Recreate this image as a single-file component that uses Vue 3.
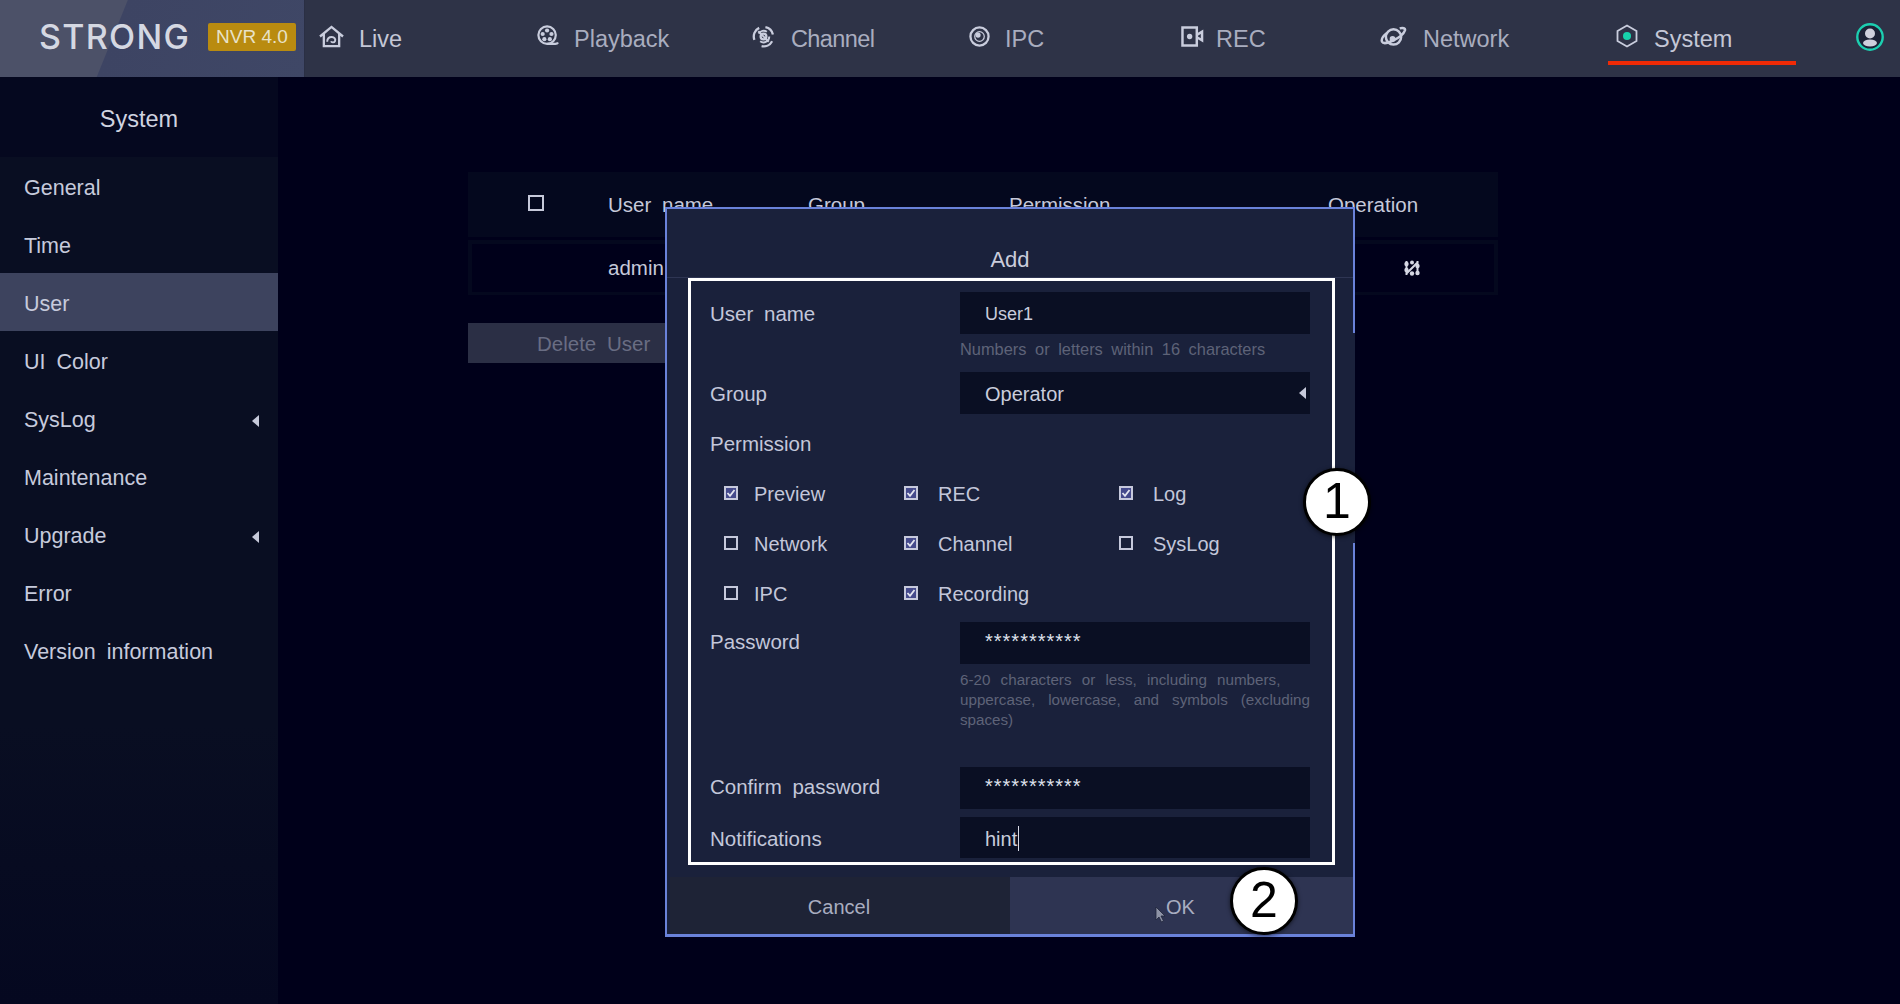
<script setup>
const sideItems = [
  { label: 'General' }, { label: 'Time' }, { label: 'User', active: true }, { label: 'UI Color' },
  { label: 'SysLog', arrow: true }, { label: 'Maintenance' }, { label: 'Upgrade', arrow: true },
  { label: 'Error' }, { label: 'Version information' }
]
const perms = [
  { label: 'Preview', on: true }, { label: 'REC', on: true }, { label: 'Log', on: true },
  { label: 'Network', on: false }, { label: 'Channel', on: true }, { label: 'SysLog', on: false },
  { label: 'IPC', on: false }, { label: 'Recording', on: true }
]
</script>

<template>
  <div class="page">
    <header class="topbar">
      <div class="brand">
        <span class="logo">STRONG</span>
        <span class="badge">NVR 4.0</span>
      </div>
      <nav class="nav">
        <div class="nav-item live">
          <svg class="ico" viewBox="0 0 26 24" fill="none" stroke="#c9cddd" stroke-width="2.400">
            <path d="M1 12 13 2l12 10M5 9.500V22h16V9.500" />
            <path d="M8.500 17.500c0-3 2-5 4.800-5s4.200 2.300 3.400 4.200c-.8 1.800-3.600 2-4.200.3" stroke-width="2" />
          </svg>
          <span>Live</span>
        </div>
        <div class="nav-item playback">
          <svg class="ico" viewBox="0 0 24 24" fill="none" stroke="#c9cddd" stroke-width="2.400">
            <circle cx="11" cy="11" r="9.500" />
            <path d="M11 20.500h9c1.500 0 2.500-.5 3-1.500" />
            <g fill="#c9cddd" stroke="none"><circle cx="11" cy="6" r="2.300" /><circle cx="6.200" cy="9.800" r="2.300" /><circle cx="15.800" cy="9.800" r="2.300" /><circle cx="8" cy="15.500" r="2.300" /><circle cx="14" cy="15.500" r="2.300" /></g>
          </svg>
          <span>Playback</span>
        </div>
        <div class="nav-item channel">
          <svg class="ico" viewBox="0 0 24 24" fill="none" stroke="#c9cddd" stroke-width="2.400">
            <circle cx="12" cy="12" r="3" />
            <path d="M7 9A6 6 0 0 1 15.500 7M18 12a6 6 0 0 1-9.500 5M6.500 6.500l11 11" stroke-width="2" />
            <path d="M2.500 15.500A10 10 0 0 1 7.500 3M14 2.200A10 10 0 0 1 21.800 10M21 17A10 10 0 0 1 10 22" />
          </svg>
          <span>Channel</span>
        </div>
        <div class="nav-item ipc">
          <svg class="ico" viewBox="0 0 22 22" fill="none" stroke="#c9cddd" stroke-width="2.400">
            <circle cx="11" cy="11" r="9.500" />
            <circle cx="11" cy="11" r="5" stroke-width="1.300" />
            <circle cx="9.500" cy="9.500" r="2.700" fill="#c9cddd" stroke="none" />
          </svg>
          <span>IPC</span>
        </div>
        <div class="nav-item rec">
          <svg class="ico" viewBox="0 0 24 22" fill="none" stroke="#c9cddd" stroke-width="2.600">
            <path d="M1.500 1.500h15v19h-15zM17 9l5-3v9l-5-3" />
            <circle cx="9" cy="11" r="2.800" fill="#c9cddd" stroke="none" />
          </svg>
          <span>REC</span>
        </div>
        <div class="nav-item network">
          <svg class="ico" viewBox="0 0 28 22" fill="none" stroke="#c9cddd" stroke-width="2.600">
            <circle cx="14" cy="11.500" r="8" />
            <path d="M7.500 7C3.500 10 1 14 2 16.500c1 2 6 1.500 12-1.500s11-7.500 12-10.500c.6-2-2-3-5.500-2" />
            <circle cx="13" cy="13.500" r="3" fill="#c9cddd" stroke="none" />
          </svg>
          <span>Network</span>
        </div>
        <div class="nav-item system">
          <svg class="ico" viewBox="0 0 22 24" fill="none" stroke="#c9cddd" stroke-width="1.800">
            <path d="M11 1.500 20.500 7v10L11 22.500 1.500 17V7z" />
            <circle cx="11" cy="12" r="4" fill="#17d3ac" stroke="none" />
          </svg>
          <span>System</span>
        </div>
        <div class="avatar">
          <svg viewBox="0 0 28 28" width="28" height="28">
            <circle cx="14" cy="14" r="12.700" fill="#1d2236" stroke="#1ccfb0" stroke-width="2.400" />
            <circle cx="14" cy="10.500" r="5" fill="#cfd0dc" />
            <ellipse cx="14" cy="20" rx="7" ry="3.500" fill="#cfd0dc" />
          </svg>
        </div>
      </nav>
    </header>

    <div class="body">
      <aside class="sidebar">
        <div class="side-title">System</div>
        <div
          v-for="item in sideItems"
          :key="item.label"
          class="side-item"
          :class="{ active: item.active }"
        >
          <span>{{ item.label }}</span>
          <i v-if="item.arrow" class="tri"></i>
        </div>
      </aside>

      <main class="main">
        <div class="thead">
          <span class="c-check"><i class="box"></i></span>
          <span class="c-name">User name</span>
          <span class="c-group">Group</span>
          <span class="c-perm">Permission</span>
          <span class="c-op">Operation</span>
        </div>
        <div class="trow">
          <span class="c-check"></span>
          <span class="c-name">admin</span>
          <span class="c-group"></span>
          <span class="c-perm"></span>
          <span class="c-op">
            <svg class="op-icon" viewBox="0 0 16 16" fill="none" stroke="#d6d8e4" stroke-width="2">
              <path d="M2.500 1v14M13.500 1v14M2 14 14 2" />
              <g fill="#d6d8e4" stroke="none"><circle cx="2.500" cy="4" r="2.200" /><circle cx="2.500" cy="10" r="2.200" /><circle cx="13.500" cy="6" r="2.200" /><circle cx="13.500" cy="13" r="2.200" /><circle cx="8" cy="13.500" r="2.200" /><circle cx="8" cy="2.500" r="2" /></g>
            </svg>
          </span>
        </div>
        <div class="delete-btn"><span>Delete User</span></div>
      </main>
    </div>

    <section class="modal">
      <i class="modal-rborder"></i>
      <h2 class="modal-title">Add</h2>
      <div class="form">
        <div class="field f-user">
          <label>User name</label>
          <div class="ctl">
            <div class="input">User1</div>
            <p class="hint">Numbers or letters within 16 characters</p>
          </div>
        </div>
        <div class="field f-group">
          <label>Group</label>
          <div class="ctl">
            <div class="input select">Operator<i class="tri"></i></div>
          </div>
        </div>
        <div class="perm-title">Permission</div>
        <div class="perm-grid">
          <div v-for="p in perms" :key="p.label" class="perm">
            <svg class="cb" viewBox="0 0 14 14">
              <rect x="1" y="1" width="12" height="12" :fill="p.on ? '#454a8c' : 'none'" stroke="#c6c9dc" stroke-width="2" />
              <path v-if="p.on" d="M3.500 7l2.500 2.800L10.500 4" fill="none" stroke="#e4e6f0" stroke-width="1.800" />
            </svg>
            <span>{{ p.label }}</span>
          </div>
        </div>
        <div class="field f-pass">
          <label>Password</label>
          <div class="ctl">
            <div class="input stars">***********</div>
            <p class="hint pass-hint">
              <span>6-20 characters or less, including numbers,</span>
              <span class="full">uppercase, lowercase, and symbols (excluding</span>
              <span>spaces)</span>
            </p>
          </div>
        </div>
        <div class="field f-confirm">
          <label>Confirm password</label>
          <div class="ctl">
            <div class="input stars">***********</div>
          </div>
        </div>
        <div class="field f-note">
          <label>Notifications</label>
          <div class="ctl">
            <div class="input note">hint<i class="caret"></i></div>
          </div>
        </div>
      </div>
      <div class="modal-foot">
        <div class="btn cancel">Cancel</div>
        <div class="btn ok">OK</div>
      </div>
    </section>

    <div class="marker m1">1</div>
    <div class="marker m2">2</div>
    <svg class="pointer" viewBox="0 0 11 17">
      <path d="M1 1v13l3-3 2.500 5 2-1-2.500-5h4z" fill="#8e93a6" stroke="#20243a" stroke-width=".8" />
    </svg>
  </div>
</template>

<style>
html, body { margin: 0; background: #00001a; }
</style>

<style scoped>
.page {
  position: relative;
  width: 1900px;
  height: 1004px;
  overflow: hidden;
  display: flex;
  flex-direction: column;
  background: #00001a;
  color: #c6c9da;
  font-family: "Liberation Sans", Arial, sans-serif;
  font-size: 21px;
  word-spacing: 5px;
}

/* top bar */
.topbar { height: 77px; flex: none; display: flex; background: #2e3347; }
.brand {
  width: 305px;
  flex: none;
  box-sizing: border-box;
  padding: 0 8px 3px 39px;
  display: flex;
  align-items: center;
  justify-content: space-between;
  background: linear-gradient(112deg, #4c5168 0, #4c5168 118px, #3d4463 119px, #3f4766 100%);
  border-right: 1px solid #2a2f44;
}
.logo {
  font-family: Inter, "Liberation Sans", sans-serif;
  font-weight: 500;
  font-size: 34px;
  line-height: 30px;
  letter-spacing: 1.300px;
  color: #d5d8e2;
}
.badge {
  width: 88px;
  height: 28px;
  border-radius: 2px;
  background: #b98b10;
  color: #e8e2c8;
  font-size: 19px;
  line-height: 28px;
  text-align: center;
  word-spacing: 0;
}
.nav { flex: 1; display: flex; align-items: stretch; position: relative; }
.nav-item {
  display: flex;
  align-items: center;
  height: 77px;
  box-sizing: border-box;
  padding: 1px 0 0;
  font-size: 23.500px;
  color: #a9adbf;
  flex: none;
  position: relative;
}
.ico { flex: none; display: block; margin-top: -6px; }
.live { width: 232px; padding-left: 14px; color: #c4c7d6; }
.live .ico { width: 25px; height: 23px; margin-right: 15px; }
.playback { width: 215px; }
.playback .ico { width: 22px; height: 22px; margin-right: 15px; }
.channel { width: 217px; letter-spacing: -0.6px; }
.channel .ico { width: 23px; height: 23px; margin-right: 16px; }
.ipc { width: 212px; }
.ipc .ico { width: 21px; height: 21px; margin-right: 15px; }
.rec { width: 199px; }
.rec .ico { width: 23px; height: 21px; margin-right: 12px; }
.network { width: 228px; }
.network .ico { width: 27px; height: 21px; margin-right: 16px; }
.system { width: 188px; padding-left: 8px; color: #c4c7d6; }
.system .ico { width: 22px; height: 24px; margin-right: 16px; }
.system::after {
  content: "";
  position: absolute;
  left: 0;
  right: 0;
  top: 61px;
  height: 4px;
  background: #f02a06;
}
.avatar { margin-left: auto; margin-right: 16px; padding-top: 23px; }
.avatar svg { display: block; }

/* layout */
.body { flex: 1; display: flex; min-height: 0; }
.sidebar {
  width: 278px;
  flex: none;
  background: linear-gradient(#090e22 0, #090e22 70%, #050820 100%);
}
.side-title {
  height: 80px;
  box-sizing: border-box;
  display: flex;
  align-items: center;
  justify-content: center;
  padding-top: 4px;
  font-size: 23.500px;
  color: #d0d3e0;
  background: #05081f;
}
.side-item {
  height: 58px;
  box-sizing: border-box;
  padding: 5px 19px 0 24px;
  display: flex;
  align-items: center;
  justify-content: space-between;
  color: #c6cadc;
  font-size: 21.500px;
}
.side-item.active { background: #3d435e; }
.tri {
  display: block;
  width: 0;
  height: 0;
  border-top: 6px solid transparent;
  border-bottom: 6px solid transparent;
  border-right: 7px solid #c6c9da;
}

/* table */
.main { flex: 1; padding: 95px 0 0 190px; }
.thead, .trow { width: 1030px; display: flex; align-items: center; font-size: 20.500px; }
.thead { height: 65px; background: #04081e; }
.trow {
  height: 55px;
  margin-top: 3px;
  box-sizing: border-box;
  border: 4px solid #04081e;
  border-bottom-width: 3px;
  margin-bottom: 28px;
}
.c-check { width: 140px; flex: none; display: flex; padding-left: 60px; box-sizing: border-box; }
.c-name { width: 200px; flex: none; }
.c-group { width: 201px; flex: none; }
.c-perm { width: 319px; flex: none; }
.c-op { flex: 1; }
.trow .c-name { margin-left: -4px; width: 204px; }
.box { display: block; width: 12px; height: 12px; border: 2px solid #c6c9da; margin-top: -4px; }
.op-icon { display: block; width: 16px; height: 16px; margin-left: 72px; }
.delete-btn {
  width: 210px;
  height: 40px;
  background: #2b2f45;
  color: #696d83;
  display: flex;
  align-items: center;
  padding: 2px 0 0 69px;
  box-sizing: border-box;
  font-size: 20.500px;
}

/* modal */
.modal {
  position: absolute;
  left: 665px;
  top: 207px;
  width: 690px;
  height: 730px;
  box-sizing: border-box;
  border-style: solid;
  border-color: #6a82da;
  border-width: 2px 0 3px 2px;
  background: #1a213b;
  display: flex;
  flex-direction: column;
}
.modal-rborder {
  position: absolute;
  top: -2px;
  right: 0;
  bottom: -3px;
  width: 2px;
  background: linear-gradient(#6a82da 0, #6a82da 126px, transparent 126px, transparent 336px, #6a82da 336px);
}
.modal-title {
  margin: 0;
  height: 69px;
  box-sizing: border-box;
  flex: none;
  text-align: center;
  font-weight: 400;
  font-size: 22px;
  line-height: 26px;
  padding: 38px 2px 0 0;
  color: #c9ccdc;
  border-bottom: 1px solid #2e3553;
}
.form {
  flex: none;
  margin: 0 0 0 21px;
  width: 647px;
  height: 587px;
  box-sizing: border-box;
  border: 3px solid #fff;
  padding: 11px 22px 0 20px;
  overflow: hidden;
}
.field { display: flex; }
.field label { width: 250px; flex: none; margin-left: -1px; color: #c3c7da; padding-top: 10px; line-height: 24px; font-size: 20.500px; }
.ctl { width: 350px; flex: none; }
.input {
  height: 42px;
  box-sizing: border-box;
  padding-left: 25px;
  background: #0a0f23;
  line-height: 44px;
  color: #c9ccdc;
  font-size: 20px;
}
.hint {
  margin: 0;
  font-size: 16.400px;
  line-height: 20px;
  color: #5e6378;
  word-spacing: 4px;
}
.f-user .input { font-size: 18px; }
.f-user .hint { padding-top: 5px; }
.f-group { margin-top: 13px; }
.select { display: flex; align-items: center; justify-content: space-between; padding: 2px 4px 0 25px; }
.select .tri { margin-top: -2px; }
.perm-title { margin-top: 18px; margin-left: -1px; line-height: 24px; font-size: 20.500px; color: #c3c7da; }
.perm-grid {
  display: grid;
  grid-template-columns: 180px 215px 1fr;
  grid-auto-rows: 50px;
  margin: 13px 0 0 13px;
}
.perm { display: flex; align-items: center; gap: 16px; color: #c3c7da; font-size: 20px; }
.perm:nth-child(3n+2), .perm:nth-child(3n) { gap: 20px; }
.cb { width: 14px; height: 14px; flex: none; margin-top: -2px; }
.f-pass { margin-top: 3px; }
.f-pass label { padding-top: 8px; }
.pass-hint { margin-top: 6px; font-size: 15.200px; word-spacing: 6px; }
.pass-hint span { display: block; white-space: nowrap; }
.pass-hint .full { white-space: normal; text-align: justify; text-align-last: justify; }
.stars { line-height: 38px; font-size: 20px; letter-spacing: 1px; color: #dfe1ec; }
.f-confirm { margin-top: 37px; }
.f-confirm label { padding-top: 8px; }
.f-note { margin-top: 8px; }
.f-note label { padding-top: 10px; }
.note { display: flex; align-items: center; font-size: 20px; padding-top: 2px; }
.caret { display: block; width: 1px; height: 25px; background: #d8dae6; margin-left: 1px; }
.f-note .input { height: 41px; }
.modal-foot { flex: none; display: flex; margin: 12px 2px 0 3px; height: 57px; }
.btn {
  flex: 1;
  display: flex;
  align-items: center;
  justify-content: center;
  font-size: 20px;
  color: #a9adc0;
  padding-top: 4px;
  box-sizing: border-box;
}
.cancel { flex: 0 0 340px; background: #1e2336; padding-right: 2px; }
.ok { background: #2e3452; padding-right: 2px; }

/* annotation overlays */
.marker {
  position: absolute;
  width: 68px;
  height: 68px;
  box-sizing: border-box;
  border-radius: 50%;
  background: #fff;
  border: 3px solid #000;
  box-shadow: 0 1px 4px rgba(0, 0, 0, .6);
  color: #000;
  font-size: 50px;
  line-height: 60px;
  text-align: center;
}
.m1 { left: 1303px; top: 468px; }
.m2 { left: 1230px; top: 867px; }
.pointer { position: absolute; left: 1155px; top: 906px; width: 11px; height: 17px; }
</style>
